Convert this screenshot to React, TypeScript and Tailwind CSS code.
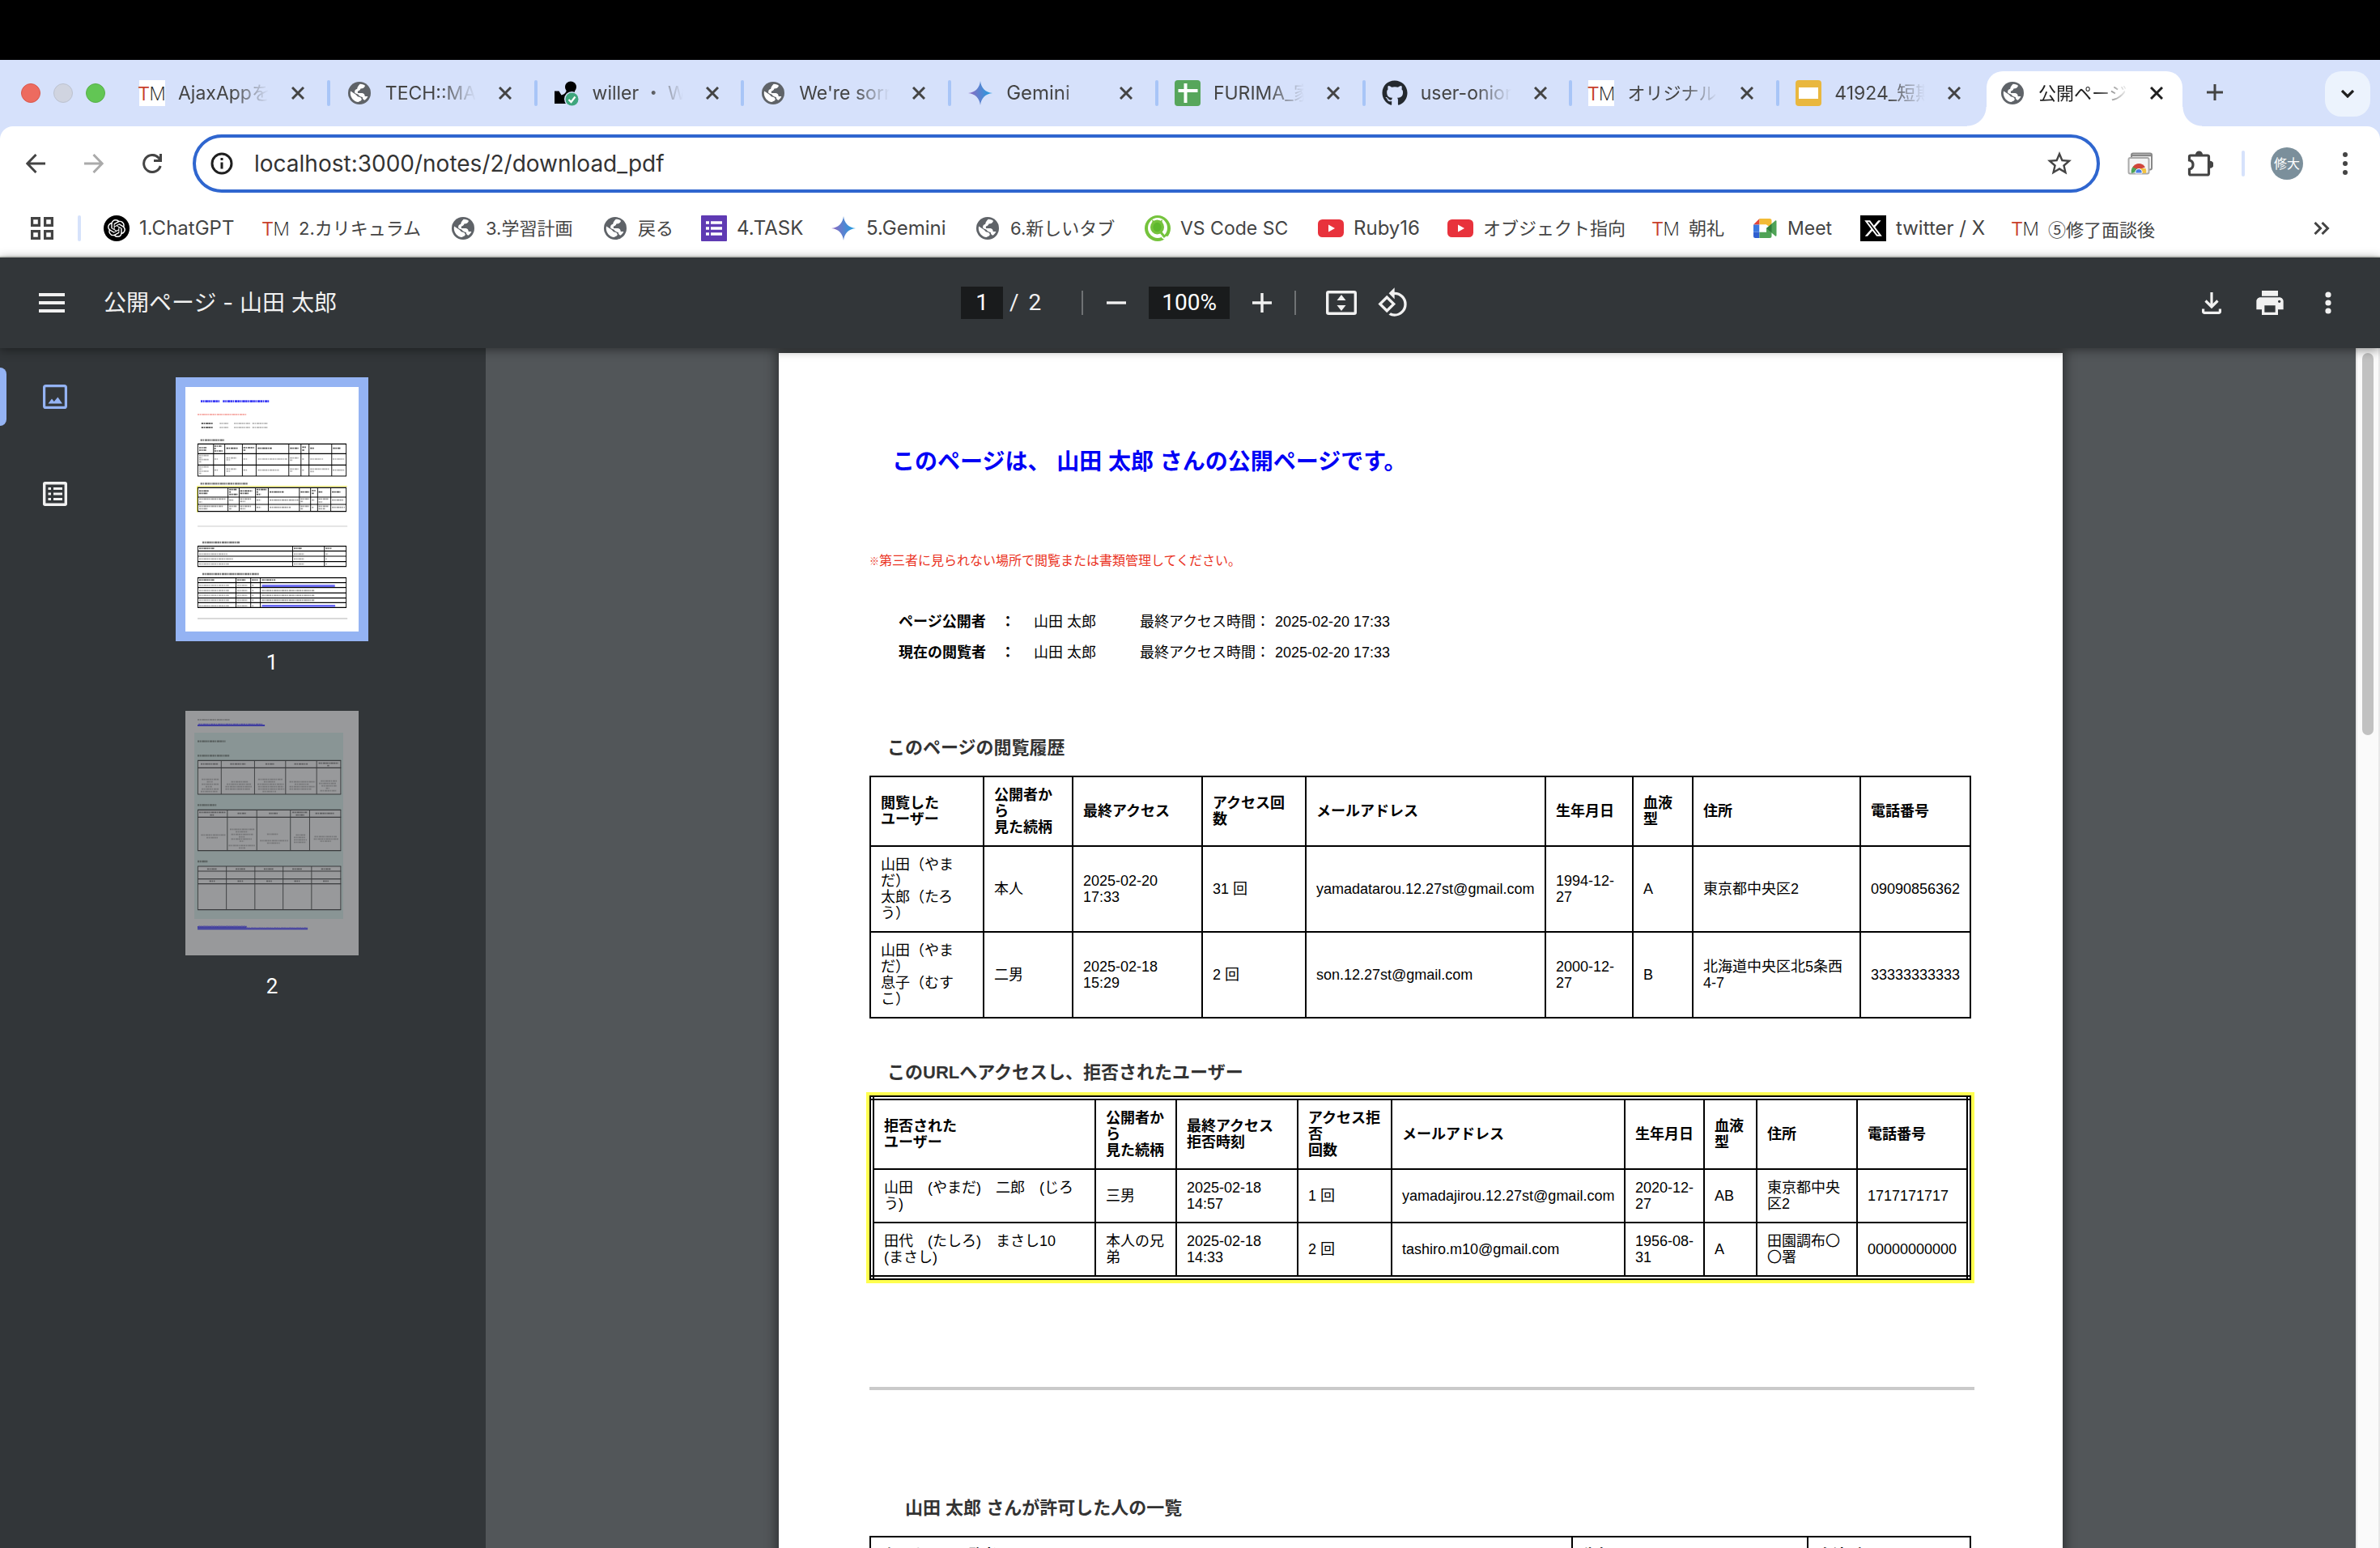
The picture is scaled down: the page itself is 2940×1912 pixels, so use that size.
import React from 'react';
import { MdPrint, MdOutlineStarBorder } from 'react-icons/md';
import { FaGithub, FaXTwitter } from 'react-icons/fa6';
import { SiOpenai } from 'react-icons/si';

/* ---------- favicons ---------- */

const Globe = () => (
  <svg viewBox="2 2 20 20" className="size-7 shrink-0">
    <circle cx="12" cy="12" r="10" fill="#5f6368" />
    <path d="M11 19.930c-3.950-.49-7-3.850-7-7.930 0-.62.080-1.210.210-1.790L9 13.500l1.500 1.500c1.800.3 3.500 1 3.500 2.500-.3 1.500-1.800 1.500-3 2.430z" fill="#fff" />
    <path
      d="M12.500 4c2.500 0 3.800.7 4.500 1.500-.6 1.800-2 2.500-4 2.500-.3 1.200-1.200 2-2.500 2.200V12h4c1.500.2 2.300 1.200 2.300 2.800h2.600c-.6 1.500-1.600 2.600-2.700 3.400-1.200-.2-1.900-1.200-2-2.700-2-.2-3-1-3.700-2.200L8 12c-.6-2 .2-3.300 2-3.700.2-1.800 1-2.700 2.500-4.300z"
      fill="#fff"
    />
  </svg>
);

const TechMaster = ({ boxed = false }: { boxed?: boolean }) => (
  <span
    aria-hidden="true"
    className={
      boxed
        ? 'flex size-8 items-center justify-center bg-white font-["Open_Sans"] text-2xl leading-8 font-light'
        : 'flex size-8 items-center justify-center font-["Open_Sans"] text-2xl leading-8 font-light'
    }
  >
    <span className="font-normal text-[#c8402c]">T</span>
    <span className="text-[#222]">M</span>
  </span>
);

const Willer = () => (
  <svg viewBox="0 0 32 32" className="size-8">
    <circle cx="21" cy="8.500" r="7" fill="#000" />
    <path d="M1 13.500h5.500l3 5c4-1 6.500-3.500 6.500-8h10v8L17 29H1z" fill="#000" />
    <circle cx="22.500" cy="23.500" r="9.500" fill="#d6e1fb" />
    <circle cx="22.500" cy="23.500" r="8" fill="#3fa67d" />
    <path d="m18.500 24 3 3 5-6.500" fill="none" stroke="#fff" strokeWidth="2.200" />
  </svg>
);

const Gemini = () => (
  <svg viewBox="0 0 32 32" className="size-8">
    <defs>
      <linearGradient id="gem" x1="0" x2="1" y1="0.500" y2="0.400">
        <stop offset="0" stopColor="#9168c0" />
        <stop offset="0.500" stopColor="#5684d1" />
        <stop offset="1" stopColor="#1ba1e3" />
      </linearGradient>
    </defs>
    <path d="M16 1c.8 8.500 6.500 14.200 15 15-8.500.8-14.200 6.500-15 15-.8-8.500-6.500-14.200-15-15 8.500-.8 14.200-6.500 15-15z" fill="url(#gem)" />
  </svg>
);

const Sheets = () => (
  <svg viewBox="0 0 32 32" className="size-8">
    <rect width="32" height="32" rx="4" fill="#57a65b" />
    <path d="M4.500 13h24M13.500 4v24" stroke="#fff" strokeWidth="4" />
  </svg>
);

const Slides = () => (
  <svg viewBox="0 0 32 32" className="size-8">
    <rect width="32" height="32" rx="4" fill="#e9b73e" />
    <rect x="4" y="9" width="24" height="14" fill="#fff" />
  </svg>
);

const Forms = () => (
  <svg viewBox="0 0 32 32" className="size-8">
    <rect width="32" height="32" rx="1" fill="#5f3ab3" />
    <path d="M6 9h4M6 16h4M6 23h4M12 9h14M12 16h14M12 23h14" stroke="#fff" strokeWidth="3.500" />
  </svg>
);

const ChatGpt = () => (
  <span className="flex size-8 items-center justify-center rounded-full bg-black">
    <SiOpenai className="size-[22px] text-white" />
  </span>
);

const Qiita = () => (
  <svg viewBox="0 0 32 32" className="size-8">
    <circle cx="16" cy="16" r="16" fill="#75c33c" />
    <ellipse cx="16" cy="15.500" rx="12" ry="12.500" fill="#fff" />
    <ellipse cx="15.500" cy="14.500" rx="8.500" ry="9" fill="#75c33c" />
    <ellipse cx="15.500" cy="14.500" rx="5" ry="5.800" fill="#5db82c" />
    <path d="M10 10 9 5l4 3M21 10l1-5-4 3" fill="#75c33c" />
    <path d="M22 26q4 3.500 7 1" fill="none" stroke="#fff" strokeWidth="4" />
    <path d="M20 21l5 6" stroke="#75c33c" strokeWidth="3" />
  </svg>
);

const YouTube = () => (
  <svg viewBox="0 0 32 32" className="size-8">
    <rect y="5" width="32" height="22" rx="5.500" fill="#e8323c" />
    <path d="m13 11.500 8 4.500-8 4.500z" fill="#fff" />
  </svg>
);

const Meet = () => (
  <svg viewBox="0 0 32 32" className="size-8">
    <path d="M2 11.500 9.500 4v7.500z" fill="#e4453a" />
    <path d="M9.500 4H22a2.500 2.500 0 0 1 2.500 2.500V16l-6.500-4.500H9.500z" fill="#f2bb35" />
    <path d="M2 11.500h7.500v9H2z" fill="#3b78e0" />
    <path d="M2 20.500h7.500V28h-5A2.500 2.500 0 0 1 2 25.500z" fill="#2f5fd0" />
    <path d="M9.500 20.500H18V16h6.500v9.500A2.500 2.500 0 0 1 22 28H9.500z" fill="#4fa356" />
    <path d="m18 16 11-9.500c.8-.6 1.500-.2 1.500.7v17.600c0 .9-.8 1.200-1.500.6z" fill="#4fa356" />
    <path d="m18 16 6.500-5.500v11z" fill="#2f7d3c" />
    <rect x="9.500" y="11.500" width="8.500" height="9" fill="#fff" />
  </svg>
);

const XLogo = () => (
  <span className="flex size-8 items-center justify-center bg-black">
    <FaXTwitter className="size-6 text-white" />
  </span>
);

/* ---------- browser chrome ---------- */

type Tab = { title: string; icon: React.ReactNode; size?: string };

const tabs: Tab[] = [
  { title: 'AjaxAppを', icon: <TechMaster boxed /> },
  { title: 'TECH::MA', icon: <Globe /> },
  { title: 'willer ・ W', icon: <Willer /> },
  { title: "We're sorry", icon: <Globe /> },
  { title: 'Gemini', icon: <Gemini />, size: 'text-2xl' },
  { title: 'FURIMA_家', icon: <Sheets /> },
  { title: 'user-onion', icon: <FaGithub className="size-8 text-[#24292f]" /> },
  { title: 'オリジナル', icon: <TechMaster boxed />, size: 'text-[22px]' },
  { title: '41924_短期', icon: <Slides /> },
];

const CloseIcon = () => (
  <svg viewBox="0 0 16 16" className="size-4" fill="none" stroke="currentColor" strokeWidth="3">
    <path d="M1 1l14 14M15 1 1 15" />
  </svg>
);

const TabTitle = ({ children, size = 'text-[23px]' }: { children: React.ReactNode; size?: string }) => (
  <button
    type="button"
    className={`h-8 w-28 shrink-0 overflow-hidden text-left leading-8 whitespace-nowrap [mask-image:linear-gradient(90deg,#000_60%,transparent)] ${size}`}
  >
    {children}
  </button>
);

const TabStrip = () => (
  <div className="flex h-[82px] shrink-0 bg-[#d6e1fb] pt-[14px] text-[#444]">
    <div className="flex w-[152px] shrink-0 items-center gap-4 pb-[14px] pl-[26px]">
      <span className="size-6 rounded-full border border-[#d9574b] bg-[#ed6b5f]" />
      <span className="size-6 rounded-full border border-[#bcc2d0] bg-[#d0d4e0]" />
      <span className="size-6 rounded-full border border-[#57b049] bg-[#62c654]" />
    </div>
    <div className="flex min-w-0 flex-1">
      {tabs.map((t, i) => (
        <div key={t.title} className="flex min-w-0 flex-1 items-center pb-[14px] pl-5">
          <span className="flex size-8 shrink-0 items-center justify-center">{t.icon}</span>
          <span className="w-4 shrink-0" />
          <TabTitle size={t.size}>{t.title}</TabTitle>
          <button type="button" aria-label="閉じる" className="ml-7 text-[#444]">
            <CloseIcon />
          </button>
          <span className={i < 8 ? 'ml-auto h-8 w-1 rounded bg-[#a8c5f7]' : 'hidden'} />
        </div>
      ))}
    </div>
    <div className="relative flex w-[242px] shrink-0 items-center rounded-t-[20px] bg-white pb-[14px] pl-4 text-[#1f1f1f]">
      <span className="absolute bottom-0 -left-6 size-6 bg-[radial-gradient(circle_at_0_0,transparent_23px,#fff_24px)]" />
      <span className="absolute -right-6 bottom-0 size-6 bg-[radial-gradient(circle_at_100%_0,transparent_23px,#fff_24px)]" />
      <span className="flex size-8 shrink-0 items-center justify-center">
        <Globe />
      </span>
      <span className="w-4 shrink-0" />
      <TabTitle size="text-[22px]">公開ページ</TabTitle>
      <button type="button" aria-label="閉じる" className="ml-[26px]">
        <CloseIcon />
      </button>
    </div>
    <div className="flex w-[244px] shrink-0 items-start justify-between pr-3 pl-[30px]">
      <button type="button" aria-label="新しいタブ" className="flex h-[52px] items-center">
        <svg viewBox="0 0 20 20" className="size-5" stroke="#444" strokeWidth="3">
          <path d="M10 0v20M0 10h20" />
        </svg>
      </button>
      <button type="button" aria-label="タブを検索" className="flex size-14 items-center justify-center rounded-[20px] bg-[#ecf3fd]">
        <svg viewBox="0 0 16 10" className="h-[10px] w-4" fill="none" stroke="#1f1f1f" strokeWidth="3.200">
          <path d="m1 1 7 7 7-7" />
        </svg>
      </button>
    </div>
  </div>
);

const AddressBar = () => (
  <div className="bg-[#d6e1fb]">
    <div className="flex h-[92px] items-center rounded-t-2xl bg-white pr-7 pl-8 text-[#444]">
      <div className="flex w-[206px] shrink-0 items-center gap-12">
        <button type="button" aria-label="戻る">
          <svg viewBox="0 0 24 24" className="size-6" fill="none" stroke="#444" strokeWidth="3">
            <path d="M24 12H2M12.500 1 1.800 12l10.700 11" />
          </svg>
        </button>
        <button type="button" aria-label="進む">
          <svg viewBox="0 0 24 24" className="size-6" fill="none" stroke="#aaa" strokeWidth="3">
            <path d="M0 12h22M11.500 1l10.700 11-10.700 11" />
          </svg>
        </button>
        <button type="button" aria-label="再読み込み">
          <svg viewBox="0 0 24 24" className="size-6" fill="none" stroke="#444" strokeWidth="3">
            <path d="M22.200 15A10.500 10.500 0 1 1 20 5l2.500 2.800" />
            <path d="M22.500 0v8.500H14" />
          </svg>
        </button>
      </div>
      <label className="flex h-[72px] min-w-0 flex-1 items-center rounded-full border-4 border-[#2f66cf] pr-7 pl-[18px]">
        <svg viewBox="0 0 28 28" className="size-7 shrink-0" fill="none" stroke="#1f1f1f" strokeWidth="3">
          <circle cx="14" cy="14" r="12" />
          <path d="M14 12.500V20.500M14 7v3" />
        </svg>
        <input
          aria-label="アドレス"
          defaultValue="localhost:3000/notes/2/download_pdf"
          className="ml-[26px] min-w-0 flex-1 bg-transparent text-[28px] leading-10 text-[#333] outline-none"
        />
        <button type="button" aria-label="ブックマーク">
          <MdOutlineStarBorder className="size-[36px]" />
        </button>
      </label>
      <div className="ml-[34px] flex shrink-0 items-center">
        <svg viewBox="0 0 32 28" className="h-7 w-8">
          <rect x="5" y="1.500" width="25" height="20" rx="2" fill="#fff" stroke="#888" strokeWidth="2" />
          <path d="M5 4h25" stroke="#888" strokeWidth="2.500" />
          <rect x="1.500" y="7" width="25" height="19.500" rx="2" fill="#f4f4f4" stroke="#aaa" strokeWidth="2" />
          <path d="M5 26a9 9 0 0 1 4.500-10L14 23z" fill="#4fa356" />
          <path d="M6.500 18.500a9 9 0 0 1 15.500 0l-8 3z" fill="#d0453a" />
          <path d="M14 20h8.500q1.500 3 .5 6h-9z" fill="#f2c243" />
          <path d="M10 26a4.200 4.200 0 1 1 8 0z" fill="#4a7de8" stroke="#fff" strokeWidth="1" />
        </svg>
        <button type="button" aria-label="拡張機能" className="ml-[42px]">
          <svg viewBox="0 0 32 32" className="size-8">
            <path
              d="M4 6H25a1.500 1.500 0 0 1 1.500 1.500V28.500A1.500 1.500 0 0 1 25 30H4a1.500 1.500 0 0 1-1.500-1.500V23c6-1 6-10 0-11V7.500A1.500 1.500 0 0 1 4 6z"
              fill="none"
              stroke="#444"
              strokeWidth="3.200"
            />
            <path d="M10 5a4.500 4.500 0 0 1 9 0zM28 12.800a4.500 4.500 0 0 1 0 9z" fill="#444" />
          </svg>
        </button>
        <span className="ml-[35px] h-8 w-1 rounded bg-[#d6e2fb]" />
        <span className="ml-8 flex size-10 items-center justify-center rounded-full bg-[#7b8f9b] text-base text-white">修大</span>
        <button type="button" aria-label="メニュー" className="ml-[49px] pr-3">
          <svg viewBox="0 0 6 28" className="h-7 w-[6px]" fill="#444">
            <circle cx="3" cy="3" r="3" />
            <circle cx="3" cy="14" r="3" />
            <circle cx="3" cy="25" r="3" />
          </svg>
        </button>
      </div>
    </div>
  </div>
);

const bookmarks = [
  { label: '1.ChatGPT', icon: <ChatGpt />, cls: 'w-[197px] text-2xl' },
  { label: '2.カリキュラム', icon: <TechMaster />, cls: 'w-[231px] text-[22px]' },
  { label: '3.学習計画', icon: <Globe />, cls: 'w-[188px] text-[22px]' },
  { label: '戻る', icon: <Globe />, cls: 'w-[122px] text-[22px]' },
  { label: '4.TASK', icon: <Forms />, cls: 'w-[160px] text-2xl' },
  { label: '5.Gemini', icon: <Gemini />, cls: 'w-[178px] text-2xl' },
  { label: '6.新しいタブ', icon: <Globe />, cls: 'w-[210px] text-[22px]' },
  { label: 'VS Code SC', icon: <Qiita />, cls: 'w-[214px] text-[23px]' },
  { label: 'Ruby16', icon: <YouTube />, cls: 'w-[160px] text-2xl' },
  { label: 'オブジェクト指向', icon: <YouTube />, cls: 'w-[254px] text-[22px]' },
  { label: '朝礼', icon: <TechMaster />, cls: 'w-[122px] text-[22px]' },
  { label: 'Meet', icon: <Meet />, cls: 'w-[134px] text-[23px]' },
  { label: 'twitter / X', icon: <XLogo />, cls: 'w-[188px] text-2xl' },
  { label: '⑤修了面談後', icon: <TechMaster />, cls: 'w-[190px] font-["Noto_Sans_CJK_JP"] text-[22px]' },
];

const BookmarksBar = () => (
  <nav className="flex h-[70px] shrink-0 items-center border-b-2 border-[#dfe1dc] bg-white pl-[38px] text-[#444]">
    <button type="button" aria-label="すべてのブックマーク">
      <svg viewBox="0 0 28 28" className="size-7" fill="none" stroke="#444" strokeWidth="3.200">
        <path d="M1.600 1.600h8.800v8.800H1.600zM17.600 1.600h8.800v8.800h-8.800zM1.600 17.600h8.800v8.800H1.600zM17.600 17.600h8.800v8.800h-8.800z" />
      </svg>
    </button>
    <span className="ml-[30px] h-8 w-1 rounded bg-[#d6e2fb]" />
    <div className="ml-7 flex min-w-0 flex-1">
      {bookmarks.map((b) => (
        <a key={b.label} href="#bookmark" className={`flex shrink-0 items-center gap-3 leading-8 whitespace-nowrap ${b.cls}`}>
          <span className="flex size-8 shrink-0 items-center justify-center">{b.icon}</span>
          {b.label}
        </a>
      ))}
    </div>
    <button type="button" aria-label="その他のブックマーク" className="pr-[62px]">
      <svg viewBox="0 0 20 16" className="h-4 w-5" fill="none" stroke="#444" strokeWidth="3">
        <path d="m1.500 1 7 7-7 7M10.500 1l7 7-7 7" />
      </svg>
    </button>
  </nav>
);

/* ---------- PDF viewer ---------- */

const PdfToolbar = () => (
  <header className="relative z-10 flex h-28 shrink-0 items-center bg-[#323639] font-[Roboto,'Noto_Sans_CJK_JP',sans-serif] text-[28px] leading-10 text-[#f1f1f1] shadow-[0_2px_12px_rgba(0,0,0,0.45)]">
    <div className="flex flex-1 items-center gap-12 pl-12">
      <button type="button" aria-label="メニュー">
        <svg viewBox="0 0 32 24" className="h-6 w-8" stroke="#f1f1f1" strokeWidth="4">
          <path d="M0 2h32M0 12h32M0 22h32" />
        </svg>
      </button>
      <h1 className="font-[Inter,'Noto_Sans_CJK_JP',sans-serif]">公開ページ - 山田 太郎</h1>
    </div>
    <div className="flex w-[554px] items-center">
      <input aria-label="ページ番号" defaultValue="1" className="h-10 w-[52px] bg-[#191b1c] text-center text-white outline-none" />
      <span className="ml-2">/</span>
      <span className="ml-3">2</span>
      <span className="ml-[50px] h-[30px] w-[2px] bg-[#6f7274]" />
      <button type="button" aria-label="縮小" className="ml-[29px]">
        <svg viewBox="0 0 24 24" className="size-6" stroke="#f1f1f1" strokeWidth="3.400">
          <path d="M0 12h24" />
        </svg>
      </button>
      <input aria-label="ズーム" defaultValue="100%" className="ml-7 h-10 w-[100px] bg-[#191b1c] text-center text-white outline-none" />
      <button type="button" aria-label="拡大" className="ml-7">
        <svg viewBox="0 0 24 24" className="size-6" stroke="#f1f1f1" strokeWidth="3.400">
          <path d="M0 12h24M12 0v24" />
        </svg>
      </button>
      <span className="ml-7 h-[30px] w-[2px] bg-[#6f7274]" />
      <button type="button" aria-label="ページに合わせる" className="ml-[37px]">
        <svg viewBox="0 0 38 30" className="h-[30px] w-[38px]">
          <rect x="1.700" y="1.700" width="34.600" height="26.600" rx="1.500" fill="none" stroke="#f1f1f1" strokeWidth="3.400" />
          <path d="m19 5 5.500 7h-11zM19 25l5.500-7h-11z" fill="#f1f1f1" />
        </svg>
      </button>
      <button type="button" aria-label="回転" className="ml-[25px] shrink-0">
        <svg viewBox="0 0 24 24" className="size-10" fill="#f1f1f1">
          <path d="M7.340 6.410.860 12.900l6.490 6.480 6.490-6.480-6.500-6.490zM3.690 12.900l3.660-3.660L11 12.900l-3.660 3.660-3.650-3.660zm15.670-6.260A8.950 8.950 0 0 0 13 4V.76L8.760 5 13 9.240V6c1.790 0 3.580.68 4.950 2.050a7.007 7.007 0 0 1 0 9.900 6.973 6.973 0 0 1-7.790 1.440l-1.490 1.490C10.020 21.620 11.510 22 13 22c2.300 0 4.610-.88 6.360-2.640a8.980 8.980 0 0 0 0-12.720z" />
        </svg>
      </button>
    </div>
    <div className="flex flex-1 items-center justify-end pr-[60px]">
      <button type="button" aria-label="ダウンロード">
        <svg viewBox="0 0 24 27" className="h-[27px] w-6" fill="none" stroke="#f1f1f1" strokeWidth="3.200">
          <path d="M12 0v17M4.500 10.500 12 18l7.500-7.500M1.600 20.500v3.400a1.500 1.500 0 0 0 1.500 1.500h17.800a1.500 1.500 0 0 0 1.500-1.500v-3.400" />
        </svg>
      </button>
      <button type="button" aria-label="印刷" className="ml-10">
        <MdPrint className="size-10" />
      </button>
      <button type="button" aria-label="その他" className="ml-12">
        <svg viewBox="0 0 8 28" className="h-7 w-2" fill="#f1f1f1">
          <circle cx="4" cy="4" r="3.600" />
          <circle cx="4" cy="14" r="3.600" />
          <circle cx="4" cy="24" r="3.600" />
        </svg>
      </button>
    </div>
  </header>
);

/* Miniature page drawings: [x, y, width] runs of text and line grids. */
const Runs = ({ runs, color, h = 6 }: { runs: number[][]; color: string; h?: number }) => (
  <g stroke={color} strokeWidth={h} strokeDasharray="6 1.500 4 2 9 1">
    {runs.map(([x, y, w], i) => (
      <path key={i} d={`M${x} ${y}h${w}`} />
    ))}
  </g>
);

const Grid = ({ xs, ys, color = '#000', fill = 'none' }: { xs: number[]; ys: number[]; color?: string; fill?: string }) => {
  const x0 = xs[0];
  const x1 = xs[xs.length - 1];
  const y0 = ys[0];
  const y1 = ys[ys.length - 1];
  return (
    <g stroke={color} fill="none">
      <rect x={x0} y={y0} width={x1 - x0} height={y1 - y0} fill={fill} stroke="none" />
      <g strokeWidth="3.500">
        {ys.map((y) => (
          <path key={y} d={`M${x0 - 1} ${y}H${x1 + 1}`} />
        ))}
      </g>
      <g strokeWidth="2.500">
        {xs.map((x) => (
          <path key={x} d={`M${x} ${y0}V${y1}`} />
        ))}
      </g>
    </g>
  );
};

const ThumbOne = () => (
  <svg viewBox="579 504 541 906" preserveAspectRatio="none" className="h-[302px] w-[214px] bg-white">
    <Runs color="#3a3af5" h={8} runs={[[627, 557, 60], [696, 557, 144]]} />
    <Runs color="#f59a94" h={5} runs={[[617, 606, 152]]} />
    <Runs color="#666" h={6} runs={[[629, 639, 37], [629, 654, 37]]} />
    <Runs color="#aaa" h={5} runs={[[686, 639, 27], [731, 639, 50], [788, 639, 48], [686, 654, 27], [731, 654, 50], [788, 654, 48]]} />
    <Runs color="#777" h={7} runs={[[626, 701, 74], [626, 862, 148], [632, 1080, 117], [632, 1197, 176]]} />
    <Grid xs={[618, 667, 702, 757, 800, 902, 940, 965, 1036, 1081]} ys={[715, 751, 793, 834]} />
    <Runs color="#555" h={5} runs={[[622, 729, 24], [622, 738, 22], [669, 723, 24], [669, 732, 5], [669, 741, 26], [707, 731, 36], [760, 729, 34], [760, 738, 8], [805, 731, 44], [906, 731, 26], [944, 727, 13], [944, 738, 7], [969, 731, 13], [1040, 731, 24]]} />
    <Runs color="#aaa" h={5} runs={[[622, 758, 30], [622, 766, 9], [622, 773, 30], [622, 781, 8], [669, 771, 12], [707, 767, 32], [707, 774, 14], [760, 771, 14], [805, 771, 92], [906, 767, 26], [906, 775, 8], [944, 771, 5], [969, 771, 40], [1039, 771, 38]]} />
    <Runs color="#aaa" h={5} runs={[[622, 800, 30], [622, 808, 9], [622, 816, 30], [622, 824, 8], [669, 812, 12], [707, 808, 32], [707, 816, 14], [760, 812, 12], [805, 812, 66], [906, 808, 26], [906, 816, 8], [944, 812, 5], [969, 808, 60], [969, 817, 12], [1039, 812, 38]]} />
    <path d="M616 872H1084M616 872V968" stroke="#f4f04a" strokeWidth="3" />
    <Grid xs={[618, 712, 747, 798, 838, 935, 970, 992, 1033, 1081]} ys={[877, 912, 939, 965]} />
    <Runs color="#555" h={5} runs={[[622, 889, 30], [622, 898, 26], [716, 884, 24], [716, 893, 5], [716, 902, 26], [750, 889, 38], [750, 898, 26], [801, 884, 32], [801, 893, 5], [801, 902, 14], [842, 893, 44], [939, 893, 26], [974, 888, 12], [974, 898, 7], [995, 893, 13], [1037, 893, 26]]} />
    <Runs color="#999" h={5} runs={[[622, 919, 82], [622, 930, 9], [716, 923, 14], [750, 919, 34], [750, 928, 16], [801, 923, 14], [842, 923, 90], [939, 919, 26], [939, 928, 8], [974, 923, 8], [995, 919, 32], [995, 930, 12], [1037, 923, 36], [622, 946, 74], [622, 955, 26], [716, 946, 24], [716, 955, 8], [750, 946, 34], [750, 955, 16], [801, 950, 14], [842, 950, 66], [939, 946, 26], [939, 955, 8], [974, 950, 5], [995, 946, 32], [995, 955, 20], [1037, 950, 40]]} />
    <path d="M617 1020H1085" stroke="#ddd" strokeWidth="4" />
    <path d="M617 1362H1085" stroke="#ccc" strokeWidth="5" />
    <Grid xs={[618, 914, 1013, 1081]} ys={[1094, 1112, 1131, 1151, 1169]} />
    <Runs color="#666" h={5} runs={[[622, 1102, 48], [918, 1102, 25], [1017, 1102, 18], [622, 1219, 48], [741, 1219, 26], [787, 1219, 18], [818, 1219, 42]]} />
    <Runs color="#aaa" h={5} runs={[[622, 1123, 88], [918, 1123, 32], [1017, 1123, 8], [622, 1141, 106], [918, 1141, 32], [1017, 1141, 4], [622, 1160, 94], [918, 1160, 32], [1017, 1160, 4]]} />
    <Grid xs={[618, 737, 783, 813, 1081]} ys={[1211, 1229, 1247, 1267, 1286, 1303, 1321]} />
    <Runs color="#aaa" h={5} runs={[1239, 1258, 1276, 1294, 1315].flatMap((y) => [[622, y, 94], [741, y, 32], [787, y, 5]])} />
    <Runs color="#999" h={5} runs={[[818, 1258, 164], [818, 1276, 164], [818, 1294, 164]]} />
    <path d="M818 1241H1046M818 1315H1047" stroke="#6a6af5" strokeWidth="8" />
  </svg>
);

const ThumbTwo = () => (
  <svg viewBox="579 144 541 906" preserveAspectRatio="none" className="h-[302px] w-[214px] bg-[#98999b]">
    <Runs color="#6c6d6f" h={5} runs={[[617, 177, 100]]} />
    <path d="M617 198H827M617 945H770M617 952H961" stroke="#3c3ba0" strokeWidth="6" />
    <Runs color="#5551a0" h={5} runs={[[620, 194, 200], [620, 943, 150], [770, 949, 190]]} />
    <rect x="607" y="225" width="465" height="690" fill="#899595" />
    <Runs color="#59605f" h={7} runs={[[617, 257, 87], [617, 310, 99], [617, 493, 60], [617, 702, 32]]} />
    <Grid color="#393b3d" fill="#98999b" xs={[618, 691, 795, 892, 989, 1064]} ys={[328, 355, 453]} />
    <Runs color="#5c5d5f" h={5} runs={[[627, 341, 55], [719, 341, 48], [829, 341, 27], [919, 341, 42], [995, 338, 62], [1022, 347, 7]]} />
    <Runs color="#77787a" h={5} runs={[[630, 398, 54], [646, 407, 18], [630, 416, 54], [642, 425, 20], [630, 434, 54], [627, 443, 52], [722, 407, 52], [708, 416, 76], [704, 425, 84], [704, 434, 78], [806, 398, 76], [824, 407, 36], [804, 416, 82], [806, 425, 80], [806, 434, 82], [820, 443, 42], [904, 407, 80], [920, 416, 44], [904, 425, 80], [904, 434, 68], [1002, 404, 50], [996, 413, 54], [1004, 422, 48], [1018, 431, 10], [1000, 440, 50]]} />
    <Grid color="#393b3d" fill="#98999b" xs={[618, 710, 802, 907, 967, 1064]} ys={[511, 538, 662]} />
    <Runs color="#5c5d5f" h={5} runs={[[622, 520, 82], [656, 530, 14], [742, 524, 26], [840, 524, 27], [913, 520, 46], [924, 530, 26], [985, 524, 58]]} />
    <Runs color="#77787a" h={5} runs={[[628, 604, 76], [645, 614, 36], [718, 583, 78], [736, 592, 38], [722, 602, 68], [746, 611, 18], [722, 619, 64], [748, 627, 14], [714, 643, 82], [746, 652, 20], [834, 601, 34], [812, 625, 88], [834, 634, 40], [924, 604, 30], [918, 613, 36], [918, 622, 40], [918, 631, 38], [982, 610, 70], [980, 619, 78], [1000, 627, 34]]} />
    <Grid color="#393b3d" fill="#98999b" xs={[618, 707, 796, 884, 973, 1064]} ys={[720, 738, 767, 785, 881]} />
    <Runs color="#5c5d5f" h={5} runs={[[647, 730, 30], [736, 730, 30], [824, 730, 30], [913, 730, 30], [1003, 730, 30], [654, 775, 17], [742, 775, 17], [832, 775, 17], [919, 775, 17], [1009, 775, 17]]} />
  </svg>
);

const Sidebar = () => (
  <aside className="flex w-[600px] shrink-0 bg-[#323639] pr-16 font-[Roboto,sans-serif]">
    <div className="flex w-[136px] shrink-0 flex-col gap-12 pt-6">
      <button type="button" aria-label="サムネイル" className="relative flex h-[72px] items-center justify-center">
        <span className="absolute inset-y-0 left-0 w-2 rounded-r-lg bg-[#94b3f3]" />
        <svg viewBox="0 0 30 30" className="size-[30px]">
          <rect x="1.600" y="1.600" width="26.800" height="26.800" rx="2" fill="none" stroke="#94b3f3" strokeWidth="3.200" />
          <path d="M6.500 23.500 11 17.500l2.800 3.600 4.600-5.600 5.600 8z" fill="#94b3f3" />
        </svg>
      </button>
      <button type="button" aria-label="目次" className="flex h-[72px] items-center justify-center">
        <svg viewBox="0 0 30 30" className="size-[30px]" fill="none" stroke="#f1f1f1">
          <rect x="1.700" y="1.700" width="26.600" height="26.600" rx="1" strokeWidth="3.400" />
          <path d="M6.500 8.500h3.500M6.500 15h3.500M6.500 21.500h3.500M13 8.500h11M13 15h11M13 21.500h11" strokeWidth="3.200" />
        </svg>
      </button>
    </div>
    <div className="flex flex-1 flex-col items-center pt-9 text-[26px] text-white">
      <button type="button" aria-label="1 ページ" className="bg-[#94b3f3] p-3">
        <ThumbOne />
      </button>
      <span className="h-[50px] leading-[52px]">1</span>
      <button type="button" aria-label="2 ページ" className="mt-6 p-3">
        <ThumbTwo />
      </button>
      <span className="h-[50px] leading-[52px]">2</span>
    </div>
  </aside>
);

type Data = { widths: string[]; head: string[]; rows: string[][] };

const history: Data = {
  widths: ['w-[140px]', 'w-[110px]', 'w-[160px]', 'w-[128px]', 'w-[296px]', 'w-[108px]', 'w-[74px]', 'w-[207px]', 'w-[136px]'],
  head: ['閲覧した\nユーザー', '公開者か\nら\n見た続柄', '最終アクセス', 'アクセス回\n数', 'メールアドレス', '生年月日', '血液\n型', '住所', '電話番号'],
  rows: [
    ['山田（やま\nだ）\n太郎（たろ\nう）', '本人', '2025-02-20\n17:33', '31 回', 'yamadatarou.12.27st@gmail.com', '1994-12-\n27', 'A', '東京都中央区2', '09090856362'],
    ['山田（やま\nだ）\n息子（むす\nこ）', '二男', '2025-02-18\n15:29', '2 回', 'son.12.27st@gmail.com', '2000-12-\n27', 'B', '北海道中央区北5条西\n4-7', '33333333333'],
  ],
};

const rejected: Data = {
  widths: ['w-[276px]', 'w-[100px]', 'w-[150px]', 'w-[116px]', 'w-[288px]', 'w-[98px]', 'w-[65px]', 'w-[124px]', 'w-[138px]'],
  head: ['拒否された\nユーザー', '公開者か\nら\n見た続柄', '最終アクセス\n拒否時刻', 'アクセス拒\n否\n回数', 'メールアドレス', '生年月日', '血液\n型', '住所', '電話番号'],
  rows: [
    ['山田　(やまだ)　二郎　(じろ\nう)', '三男', '2025-02-18\n14:57', '1 回', 'yamadajirou.12.27st@gmail.com', '2020-12-\n27', 'AB', '東京都中央\n区2', '1717171717'],
    ['田代　(たしろ)　まさし10\n(まさし)', '本人の兄\n弟', '2025-02-18\n14:33', '2 回', 'tashiro.m10@gmail.com', '1956-08-\n31', 'A', '田園調布〇\n〇署', '00000000000'],
  ],
};

const permitted: Data = {
  widths: ['w-[867px]', 'w-[291px]', 'w-[201px]'],
  head: ['許可された閲覧者', '生年月日', '血液型'],
  rows: [],
};

const DataTable = ({ data, highlight = false }: { data: Data; highlight?: boolean }) => (
  <table
    className={
      highlight
        ? 'w-[1361px] table-fixed border-collapse border-6 border-double border-black text-left text-lg leading-5 whitespace-pre outline-4 outline-[#ffff4f]'
        : 'w-[1361px] table-fixed border-collapse border-2 border-black text-left text-lg leading-5 whitespace-pre'
    }
  >
    <colgroup>
      {data.widths.map((w, i) => (
        <col key={i} className={w} />
      ))}
    </colgroup>
    <thead>
      <tr>
        {data.head.map((h) => (
          <th key={h} scope="col" className="border-2 border-black p-3 font-bold">
            {h}
          </th>
        ))}
      </tr>
    </thead>
    <tbody>
      {data.rows.map((r) => (
        <tr key={r[0]}>
          {r.map((c, i) => (
            <td key={i} className="border-2 border-black p-3">
              {c}
            </td>
          ))}
        </tr>
      ))}
    </tbody>
  </table>
);

const people = ['ページ公開者', '現在の閲覧者'];

const Page = () => (
  <article className="w-[1586px] shrink-0 bg-white pt-[115px] pr-[109px] pl-28 font-['Liberation_Sans','Noto_Sans_CJK_JP',sans-serif] text-black shadow-[0_0_12px_4px_rgba(0,0,0,0.4)]">
    <h2 className="pl-7 text-[28px] leading-10 font-bold text-[#0000f5]">このページは、 山田 太郎 さんの公開ページです。</h2>
    <p className="mt-[90px] text-base leading-6 text-[#ea3323]">
      <span className="font-['Noto_Sans_CJK_JP'] text-xs font-bold">※</span>第三者に見られない場所で閲覧または書類管理してください。
    </p>
    <div className="mt-11 pl-9 text-lg leading-[38px]">
      {people.map((p) => (
        <div key={p} className="flex">
          <span className="w-[126px] font-bold">{p}</span>
          <span className="w-[41px] font-bold">：</span>
          <span className="w-[131px]">山田 太郎</span>
          <span className="w-[167px]">最終アクセス時間：</span>
          <span>2025-02-20 17:33</span>
        </div>
      ))}
    </div>
    <h3 className="mt-[83px] mb-[18px] pl-[22px] text-[22px] leading-8 font-bold text-[#333]">このページの閲覧履歴</h3>
    <DataTable data={history} />
    <h3 className="mt-[51px] mb-3 pl-[22px] text-[22px] leading-8 font-bold text-[#333]">このURLへアクセスし、拒否されたユーザー</h3>
    <DataTable data={rejected} highlight />
    <hr className="mt-[132px] border-t-4 border-[#cacaca]" />
    <h3 className="mt-[130px] mb-[18px] pl-11 text-[22px] leading-8 font-bold text-[#333]">山田 太郎 さんが許可した人の一覧</h3>
    <DataTable data={permitted} />
  </article>
);

export default function App() {
  return (
    <div className="flex h-screen flex-col overflow-hidden bg-[#525659] font-[Inter,'Noto_Sans_CJK_JP',sans-serif]">
      <div className="h-[74px] shrink-0 bg-black" />
      <TabStrip />
      <AddressBar />
      <BookmarksBar />
      <PdfToolbar />
      <div className="flex min-h-0 flex-1 overflow-hidden">
        <Sidebar />
        <main className="flex min-w-0 flex-1 items-start justify-center overflow-hidden pt-1.5">
          <Page />
        </main>
        <div className="w-[30px] shrink-0 border-x-2 border-[#e8e8e8] bg-[#fafafa] px-1.5 pt-1.5">
          <div className="h-[472px] rounded-full bg-[#c1c1c1]" />
        </div>
      </div>
    </div>
  );
}
